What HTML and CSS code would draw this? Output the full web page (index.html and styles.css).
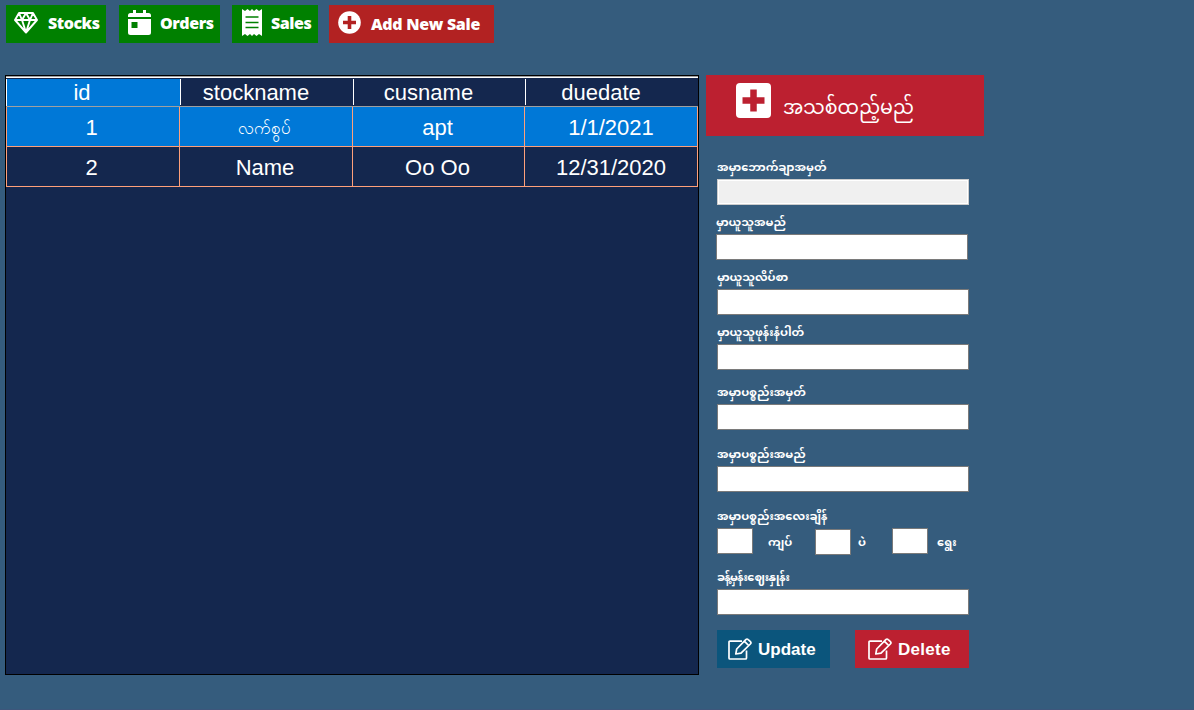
FILE: index.html
```html
<!DOCTYPE html>
<html lang="my">
<head>
<meta charset="utf-8">
<title>Sales</title>
<link rel="stylesheet" href="styles.css">
</head>
<body>
<div class="app">
  <nav class="toolbar">
    <button class="tool tool-stocks">
      <svg width="24" height="22" viewBox="0 0 24 22" fill="none" stroke="#fff" stroke-width="1.9" stroke-linejoin="round"><path d="M5 1h14l4 7-11 12.500L1 8zM1 8h22M5 1l3 7 4 12.500L16 8l3-7M8 8l4-7 4 7"/></svg>
      <span>Stocks</span>
    </button>
    <button class="tool tool-orders">
      <svg width="23" height="27" viewBox="0 0 23 27" fill="#fff"><path d="M5 1h3v3h7V1h3v3h2.500A2.500 2.500 0 0 1 23 6.500V8H0V6.500A2.500 2.500 0 0 1 2.500 4H5z"/><path fill-rule="evenodd" d="M0 10h23v13.500a2.500 2.500 0 0 1-2.500 2.500h-18A2.500 2.500 0 0 1 0 23.500zM3.500 13v6h6v-6z"/></svg>
      <span>Orders</span>
    </button>
    <button class="tool tool-sales">
      <svg width="20" height="27" viewBox="0 0 20 27"><path fill="#fff" d="M0 0l3 2 2.500-2L8 2l2-2 2 2 2.500-2L17 2l3-2v27l-3-2-2.500 2-2.500-2-2 2-2-2-2.500 2L3 25l-3 2z"/><path d="M3.500 8h13M3.500 13.500h13M3.500 18.500h13" stroke="#008000" stroke-width="1.5"/></svg>
      <span>Sales</span>
    </button>
    <button class="tool tool-add">
      <svg width="23" height="23" viewBox="0 0 23 23"><circle cx="11.500" cy="11.500" r="11.300" fill="#fff"/><path d="M11.500 5v13M5 11.500h13" stroke="#b22222" stroke-width="3.600"/></svg>
      <span>Add New Sale</span>
    </button>
  </nav>
  <main class="content">
    <section class="grid">
      <div class="row head"><div class="cell on">id</div><div class="cell">stockname</div><div class="cell">cusname</div><div class="cell">duedate</div></div>
      <div class="row selected"><div class="cell">1</div><div class="cell my"><span>လက်စွပ်</span></div><div class="cell">apt</div><div class="cell">1/1/2021</div></div>
      <div class="row"><div class="cell">2</div><div class="cell">Name</div><div class="cell">Oo Oo</div><div class="cell">12/31/2020</div></div>
    </section>
    <aside class="panel">
      <button class="banner">
        <svg width="35" height="35" viewBox="0 0 35 35"><rect width="35" height="35" rx="4" fill="#fff"/><path d="M17.500 6.500v22M6.500 17.500h22" stroke="#bc2030" stroke-width="6.500"/></svg>
        <span>အသစ်ထည့်မည်</span>
      </button>
      <form class="form">
        <div class="field"><label>အမှာဘောက်ချာအမှတ်</label><input class="box locked" disabled></div>
        <div class="field shifted"><label>မှာယူသူအမည်</label><input class="box"></div>
        <div class="field"><label>မှာယူသူလိပ်စာ</label><input class="box"></div>
        <div class="field"><label>မှာယူသူဖုန်းနံပါတ်</label><input class="box"></div>
        <div class="field gap-m"><label>အမှာပစ္စည်းအမှတ်</label><input class="box"></div>
        <div class="field gap-l"><label>အမှာပစ္စည်းအမည်</label><input class="box"></div>
        <div class="field gap-l"><label>အမှာပစ္စည်းအလေးချိန်</label>
          <div class="weights"><input class="box small"><span class="unit kyat">ကျပ်</span><input class="box small low"><span class="unit pe">ပဲ</span><input class="box small"><span class="unit ywe">ရွေး</span></div>
        </div>
        <div class="field gap-l rate"><label>ခန့်မှန်းဈေးနှုန်း</label><input class="box"></div>
        <div class="actions">
          <button type="button" class="action update"><svg width="24" height="22" viewBox="0 0 24 22" fill="none" stroke="#fff" stroke-width="1.700" stroke-linejoin="round"><path d="M14 3.200H2q-1 0-1 1V20q0 1 1 1h15.500q1 0 1-1v-7.500M7.800 16l.9-5L17.800 1.600q1.200-1.200 2.400 0l2.200 2q1.200 1.200 0 2.400L13 15.200zM16.300 3.200l4.500 4.400"/></svg><span>Update</span></button>
          <button type="button" class="action delete"><svg width="24" height="22" viewBox="0 0 24 22" fill="none" stroke="#fff" stroke-width="1.700" stroke-linejoin="round"><path d="M14 3.200H2q-1 0-1 1V20q0 1 1 1h15.500q1 0 1-1v-7.500M7.800 16l.9-5L17.800 1.600q1.200-1.200 2.400 0l2.200 2q1.200 1.200 0 2.400L13 15.200zM16.300 3.200l4.500 4.400"/></svg><span>Delete</span></button>
        </div>
      </form>
    </aside>
  </main>
</div>
</body>
</html>
```
FILE: styles.css
```css
* { box-sizing: border-box; }
body { margin: 0; background: #355c7d; color: #fff; font-family: "Liberation Sans", "Noto Sans", sans-serif; }
button { border: 0; margin: 0; color: #fff; display: flex; align-items: flex-start; text-align: left; }
button span { white-space: nowrap; }
svg { flex: none; display: block; }
.app { height: 710px; padding: 5px 0 0 5px; border-bottom: 1px solid #3d567b; overflow: hidden; }
.toolbar { display: flex; height: 38px; padding-left: 1px; }
.tool { height: 38px; background: #008000; padding: 0; font: 800 16px/37px "Open Sans", "Noto Sans", sans-serif; letter-spacing: -0.45px; }
.tool-stocks { width: 100px; padding-left: 8px; margin-right: 13px; gap: 10px; }
.tool-stocks svg { margin-top: 7px; }
.tool-orders { width: 101px; padding-left: 9px; margin-right: 12px; gap: 9px; }
.tool-orders svg { margin-top: 4px; }
.tool-sales { width: 86px; padding-left: 10px; margin-right: 11px; gap: 9px; }
.tool-sales svg { margin-top: 4px; }
.tool-add { width: 165px; padding-left: 9px; gap: 10px; background: #b22222; line-height: 39px; letter-spacing: -0.3px; }
.tool-add svg { margin-top: 6px; }
.content { display: flex; margin-top: 32px; gap: 7px; }
.grid { width: 694px; height: 600px; border: 1px solid #000; background: #14274e; }
.row { display: grid; grid-template-columns: 174px 173px 172px 173px; grid-template-rows: 100%; height: 40px; font-size: 22px; line-height: 41px; text-align: center; }
.cell { border-right: 1px solid #ffa07a; border-bottom: 1px solid #ffa07a; padding-right: 2px; }
.cell:first-child { border-left: 1px solid #ffa07a; padding-right: 3px; }
.cell:last-child { padding-right: 0; }
.selected { background: #0078d7; }
.head { height: 31px; line-height: 28px; border-top: 1px solid #a0a0a0; border-bottom: 1px solid #a0a0a0; box-shadow: inset 0 1px #fff; padding: 2px 0 1px; }
.head .cell, .head .cell:last-child { border: 0; border-left: 1px solid #fff; padding-right: 22px; }
.head .cell:first-child { padding-right: 23px; }
.head .cell.on { background: #0078d7; margin-bottom: -1px; }
.cell.my { font-size: 17px; line-height: 43px; padding-right: 4px; }
.panel { width: 278px; }
.banner { width: 278px; height: 61px; background: #bc2030; padding: 8px 0 0 30px; gap: 12px; font: 19px/54px "Noto Sans Myanmar", "Noto Sans", sans-serif; }
.form { padding: 19px 0 0 11px; }
.field label { display: block; height: 24px; font: bold 11.4px/27px "Noto Sans Myanmar", "Noto Sans", sans-serif; white-space: nowrap; }
.field { height: 50px; margin-bottom: 5px; }
.shifted { margin-left: -1px; }
.gap-m { margin-top: 10px; }
.gap-l { margin-top: 12px; }
.rate { margin-top: 11px; }
.rate label { letter-spacing: -0.7px; }
.box { display: block; width: 252px; height: 26px; border: 1px solid #7a7a7a; background: #fff; padding: 0 4px; }
.locked { background: #f0f0f0; border-color: #ccc; box-shadow: inset 0 0 0 1px #fff; }
.weights { display: flex; }
.box.small { width: 36px; }
.box.low { margin-top: 1px; }
.unit { height: 26px; font: bold 11.4px/31px "Noto Sans Myanmar", "Noto Sans", sans-serif; white-space: nowrap; }
.kyat { width: 62px; padding-left: 15px; }
.pe { width: 41px; padding-left: 7px; }
.ywe { padding-left: 9px; }
.actions { display: flex; gap: 25px; padding-top: 10px; }
.action { width: 113px; height: 38px; padding: 0 0 0 11px; gap: 6px; font: bold 17px/39px "Liberation Sans", sans-serif; }
.action svg { margin-top: 8px; }
.update { background: #0b557c; }
.delete { width: 114px; padding-left: 13px; background: #bc2030; letter-spacing: 0.3px; }
```
